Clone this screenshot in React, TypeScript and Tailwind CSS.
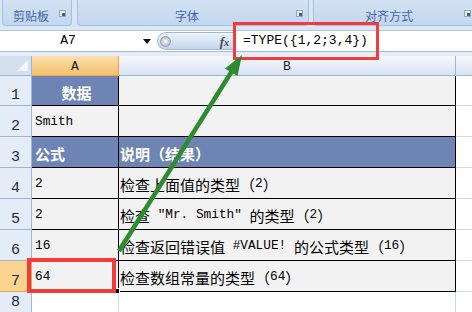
import React from "react";

function Launcher() {
  return (
    <svg width="7" height="7" viewBox="0 0 7 7" className="shrink-0">
      <rect x="0.5" y="0.5" width="6" height="6" fill="#f3f7fc" stroke="#8ea7c8" />
      <rect x="3" y="3" width="3" height="3" fill="#3d5d8c" />
    </svg>
  );
}

function Group({ className, label }: { className: string; label: string }) {
  return (
    <div
      className={`h-[26px] flex items-center pr-[5px] border-x border-b border-[#a4bedf] rounded-b-[4px] bg-linear-to-b from-[#d3e2f4] to-[#c3d7ef] ${className}`}
    >
      <span className="flex-1 text-center text-[12px] leading-none text-[#3d66a8] mt-[6px]">{label}</span>
      <div className="mt-[2px]">
        <Launcher />
      </div>
    </div>
  );
}

function M({ children }: { children: React.ReactNode }) {
  return <span className="font-['Liberation_Mono',monospace] text-[12.75px]">{children}</span>;
}

type RowProps = {
  num: number;
  h: string;
  a?: React.ReactNode;
  b?: React.ReactNode;
  head?: boolean;
  topHead?: boolean;
  active?: boolean;
};

function Row({ num, h, a, b, head, topHead, active }: RowProps) {
  const aBg = head || topHead ? "bg-[#6d84b5]" : "bg-[#f2f2f2]";
  const bBg = head ? "bg-[#6d84b5]" : "bg-[#f2f2f2]";
  return (
    <div className={`flex ${h}`}>
      <div
        className={`w-[32px] shrink-0 flex items-end justify-center pb-[2px] border-b border-r font-['Liberation_Mono',monospace] text-[15px] leading-none text-[#1b2a40] ${
          active ? "bg-[#fbd48f] border-[#e9a34d]" : "bg-[#e4ecf7] border-[#9eb6ce]"
        }`}
      >
        {num}
      </div>
      <div
        className={`w-[87px] shrink-0 flex items-center pt-[3px] pl-[3px] border-r border-b border-black text-[15px] leading-none ${aBg} ${
          topHead ? "justify-center pl-0" : ""
        } ${head || topHead ? "text-white font-bold" : "text-black"}`}
      >
        {a}
      </div>
      <div
        className={`w-[337px] shrink-0 flex items-center pt-[3px] pl-[1px] border-r border-b border-black text-[15px] leading-none whitespace-pre ${bBg} ${
          head ? "text-white font-bold" : "text-black"
        }`}
      >
        {b}
      </div>
      <div className="flex-1 bg-white border-b border-[#d0d7e5]" />
    </div>
  );
}

export default function App() {
  return (
    <div className="relative w-[472px] h-[312px] overflow-hidden bg-white font-['Noto_Sans_CJK_SC',sans-serif]">
      {/* ribbon group labels */}
      <div className="h-[27px] flex gap-[5px] pl-[2px] bg-[#d9e6f5]">
        <Group className="w-[70px] shrink-0" label="剪贴板" />
        <Group className="w-[232px] shrink-0" label="字体" />
        <Group className="w-[164px] shrink-0 ml-[-1px]" label="对齐方式" />
      </div>
      <div className="h-[4px] bg-[#dce7f5] border-b border-[#b3c5dd]" />

      {/* formula bar */}
      <div className="h-[21px] flex bg-white border-b border-[#a9bcd6]">
        <div className="w-[136px] flex items-center justify-center font-['Liberation_Mono',monospace] text-[13px] text-black">
          A7
        </div>
        <div className="w-[21px] flex items-center justify-center">
          <svg width="8" height="5" viewBox="0 0 8 5">
            <path d="M0 0h8L4 5z" fill="#111" />
          </svg>
        </div>
        <div className="w-[78px] my-[1px] flex items-center rounded-l-full border border-r-0 border-[#a3b8d4] bg-linear-to-b from-[#eef4fb] to-[#c4d5ec]">
          <div className="ml-[2px] w-[11px] h-[11px] rounded-full bg-radial from-[#ffffff] to-[#9aa6b5] border border-[#8f9db0]" />
          <div className="flex-1" />
          <span className="pr-[6px] font-['Liberation_Serif',serif] italic font-bold text-[13px] leading-none text-[#4a4a4a]">
            f<span className="text-[10px]">x</span>
          </span>
        </div>
        <div className="flex-1 flex items-center pl-[8px] font-['Liberation_Mono',monospace] text-[13px] text-black">
          =TYPE({"{"}1,2;3,4{"}"})
        </div>
      </div>
      <div className="h-[4px] bg-[#e6edf6]" />

      {/* column headers */}
      <div className="flex h-[20px] font-['Liberation_Mono',monospace] text-[13px] leading-none">
        <div className="w-[32px] shrink-0 flex items-end justify-end pr-[3px] pb-[4px] bg-[#d3e0ef] border-r border-b border-[#9eb6ce]">
          <svg width="11" height="11" viewBox="0 0 11 11">
            <path d="M11 0V11H0z" fill="#f2f6fb" />
          </svg>
        </div>
        <div className="w-[87px] shrink-0 flex items-center justify-center pt-[2px] bg-linear-to-b from-[#fbe0ad] to-[#f2c06a] border-r border-b border-[#f0a14a] text-[#222]">
          A
        </div>
        <div className="w-[337px] shrink-0 flex items-center justify-center pt-[2px] bg-linear-to-b from-[#f6f9fd] to-[#d8e3f1] border-r border-b border-[#9eb6ce] text-[#222]">
          B
        </div>
        <div className="flex-1 bg-linear-to-b from-[#f6f9fd] to-[#d8e3f1] border-b border-[#9eb6ce]" />
      </div>

      {/* rows */}
      <Row num={1} h="h-[30px]" a="数据" topHead />
      <Row num={2} h="h-[31px]" a={<M>Smith</M>} />
      <Row num={3} h="h-[31px]" a="公式" b="说明（结果）" head />
      <Row num={4} h="h-[31px]" a={<M>2</M>} b={<>检查上面值的类型（<M>2</M>）</>} />
      <Row
        num={5}
        h="h-[31px]"
        a={<M>2</M>}
        b={
          <>
            检查<M>{' "Mr. Smith" '}</M>的类型（<M>2</M>）
          </>
        }
      />
      <Row
        num={6}
        h="h-[31px]"
        a={<M>16</M>}
        b={
          <>
            检查返回错误值<M>{" #VALUE! "}</M>的公式类型（<M>16</M>）
          </>
        }
      />
      <Row num={7} h="h-[31px]" a={<M>64</M>} b={<>检查数组常量的类型（<M>64</M>）</>} active />
      <div className="flex h-[20px]">
        <div className="w-[32px] shrink-0 flex items-end justify-center pb-[2px] bg-[#e4ecf7] border-r border-[#9eb6ce] font-['Liberation_Mono',monospace] text-[15px] leading-none text-[#1b2a40]">
          8
        </div>
        <div className="w-[87px] shrink-0 border-r border-[#d0d7e5]" />
        <div className="w-[337px] shrink-0 border-r border-[#d0d7e5]" />
        <div className="flex-1" />
      </div>

      {/* annotations */}
      <div className="absolute left-[114px] top-[288px] w-[6px] h-[6px] bg-black border border-white" />
      <div className="absolute left-[233px] top-[22px] w-[146px] h-[38px] border-[3px] border-[#f23b3b]" />
      <div className="absolute left-[27px] top-[258px] w-[89px] h-[35px] border-[4px] border-[#f23b3b]" />
      <svg className="absolute inset-0 pointer-events-none" width="472" height="312" viewBox="0 0 472 312">
        <line x1="119" y1="251" x2="232" y2="71" stroke="#2f8b30" strokeWidth="4.5" />
        <polygon points="242,55 237.5,76 225,68.5" fill="#2f8b30" />
      </svg>
    </div>
  );
}
